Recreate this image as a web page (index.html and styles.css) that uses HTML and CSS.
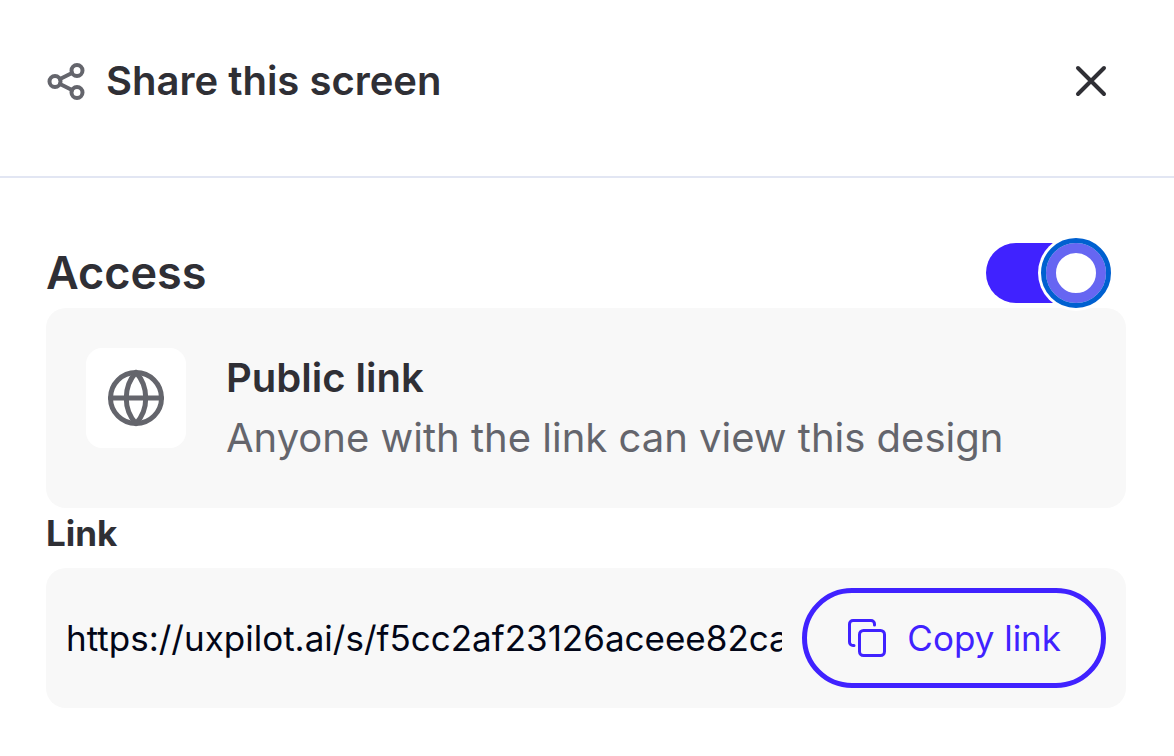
FILE: index.html
```
<!DOCTYPE html>
<html lang="en">

<head>
  <meta charset="utf-8">
  <title>Share this screen</title>
  <link rel="stylesheet" href="styles.css">
</head>

<body>
  <div class="dialog" role="dialog" aria-labelledby="title">
    <header class="dialog-header">
      <svg class="share-icon" viewBox="0 0 40 40" aria-hidden="true">
        <circle cx="9" cy="20.500" r="5.500" />
        <circle cx="31" cy="9.500" r="5.500" />
        <circle cx="31" cy="31.500" r="5.500" />
        <path d="M14 18 26 12M14 23l12 6" />
      </svg>
      <h1 class="title" id="title">Share this screen</h1>
      <button class="close" type="button" aria-label="Close">
        <svg viewBox="0 0 40 40" aria-hidden="true">
          <path d="M7 7l26 26M33 7 7 33" />
        </svg>
      </button>
    </header>

    <main class="content">
      <div class="access-row">
        <label class="access-label" for="access">Access</label>
        <input class="switch" type="checkbox" role="switch" id="access" checked>
      </div>

      <div class="card access-card">
        <div class="globe">
          <svg viewBox="0 0 60 60" aria-hidden="true">
            <circle cx="30" cy="30" r="25.500" />
            <path d="M4.500 30h51" />
            <path d="M30 4.500c-13 14-13 37 0 51M30 4.500c13 14 13 37 0 51" />
          </svg>
        </div>
        <div class="access-text">
          <h2 class="access-title">Public link</h2>
          <p class="access-desc">Anyone with the link can view this design</p>
        </div>
      </div>

      <label class="link-label" for="link">Link</label>
      <div class="card link-card">
        <input class="link-input" type="text" id="link" value="https://uxpilot.ai/s/f5cc2af23126aceee82ca41d" readonly>
        <button class="copy" type="button">
          <svg viewBox="0 0 40 40" aria-hidden="true">
            <rect x="12.500" y="12.500" width="25" height="25" rx="4" />
            <path d="M7 27.500H6a3.500 3.500 0 0 1-3.500-3.500V6A3.500 3.500 0 0 1 6 2.500h18A3.500 3.500 0 0 1 27.500 6v1" />
          </svg>
          Copy link
        </button>
      </div>
    </main>
  </div>
</body>

</html>
```
FILE: styles.css
```
*,
*::before {
  box-sizing: border-box;
}

body {
  margin: 0;
  background-color: #fff;
  color: #2f2f35;
  font-family: Inter, "Liberation Sans", sans-serif;
}

h1,
h2,
p {
  margin: 0;
}

svg {
  display: block;
  fill: none;
  stroke: currentColor;
  stroke-linecap: round;
  stroke-linejoin: round;
}

.dialog-header {
  display: flex;
  align-items: center;
  padding: 51px 58px 65px 46px;
  border-bottom: 2px solid #e2e6f3;
}

.share-icon {
  width: 40px;
  height: 40px;
  color: #64656c;
  stroke-width: 4px;
}

.title {
  flex: 1;
  margin-left: 20px;
  font-size: 40px;
  font-weight: 600;
  line-height: 60px;
}

.close {
  display: flex;
  align-items: center;
  justify-content: center;
  width: 50px;
  height: 50px;
  padding: 0;
  border: 0;
  background: none;
  color: inherit;
}

.close svg {
  width: 40px;
  height: 40px;
  stroke-width: 4px;
}

.content {
  padding: 60px 48px 48px 46px;
}

.access-row {
  display: flex;
  align-items: center;
  justify-content: space-between;
  padding-right: 20px;
}

.access-label {
  font-size: 45px;
  font-weight: 600;
  line-height: 70px;
}

.switch {
  appearance: none;
  display: flex;
  justify-content: flex-end;
  width: 120px;
  height: 60px;
  margin: 0;
  border-radius: 30px;
  background-color: #4022ff;
}

.switch::before {
  content: '';
  width: 60px;
  height: 60px;
  border: 10px solid #6666f2;
  border-radius: 50%;
  background-color: #fff;
  outline: 5px solid #0060d0;
  box-shadow: 0 0 0 8px #fff;
}

.switch:not(:checked) {
  justify-content: flex-start;
  background-color: #c8c9d0;
}

.card {
  display: flex;
  border-radius: 20px;
  background-color: #f8f8f8;
}

.access-card {
  gap: 40px;
  padding: 40px;
}

.globe {
  display: flex;
  flex: none;
  align-items: center;
  justify-content: center;
  width: 100px;
  height: 100px;
  border-radius: 16px;
  background-color: #fff;
  color: #64656c;
}

.globe svg {
  width: 60px;
  height: 60px;
  stroke-width: 5px;
}

.access-title,
.access-desc {
  font-size: 40px;
  line-height: 60px;
}

.access-title {
  font-weight: 600;
}

.access-desc {
  color: #64656c;
}

.link-label {
  display: block;
  margin-bottom: 10px;
  font-size: 35px;
  font-weight: 700;
  line-height: 50px;
}

.link-card {
  align-items: center;
  gap: 20px;
  padding: 20px;
}

.link-input {
  flex: 1;
  min-width: 0;
  padding: 0;
  border: 0;
  outline: 0;
  background: none;
  color: #020617;
  font-family: inherit;
  font-size: 35px;
  line-height: 50px;
}

.copy {
  display: flex;
  flex: none;
  align-items: center;
  gap: 20px;
  height: 100px;
  padding: 0 40px;
  border: 5px solid #4022ff;
  border-radius: 50px;
  background: none;
  color: #4022ff;
  font-family: inherit;
  font-size: 35px;
}

.copy svg {
  width: 40px;
  height: 40px;
  stroke-width: 3px;
}
```
